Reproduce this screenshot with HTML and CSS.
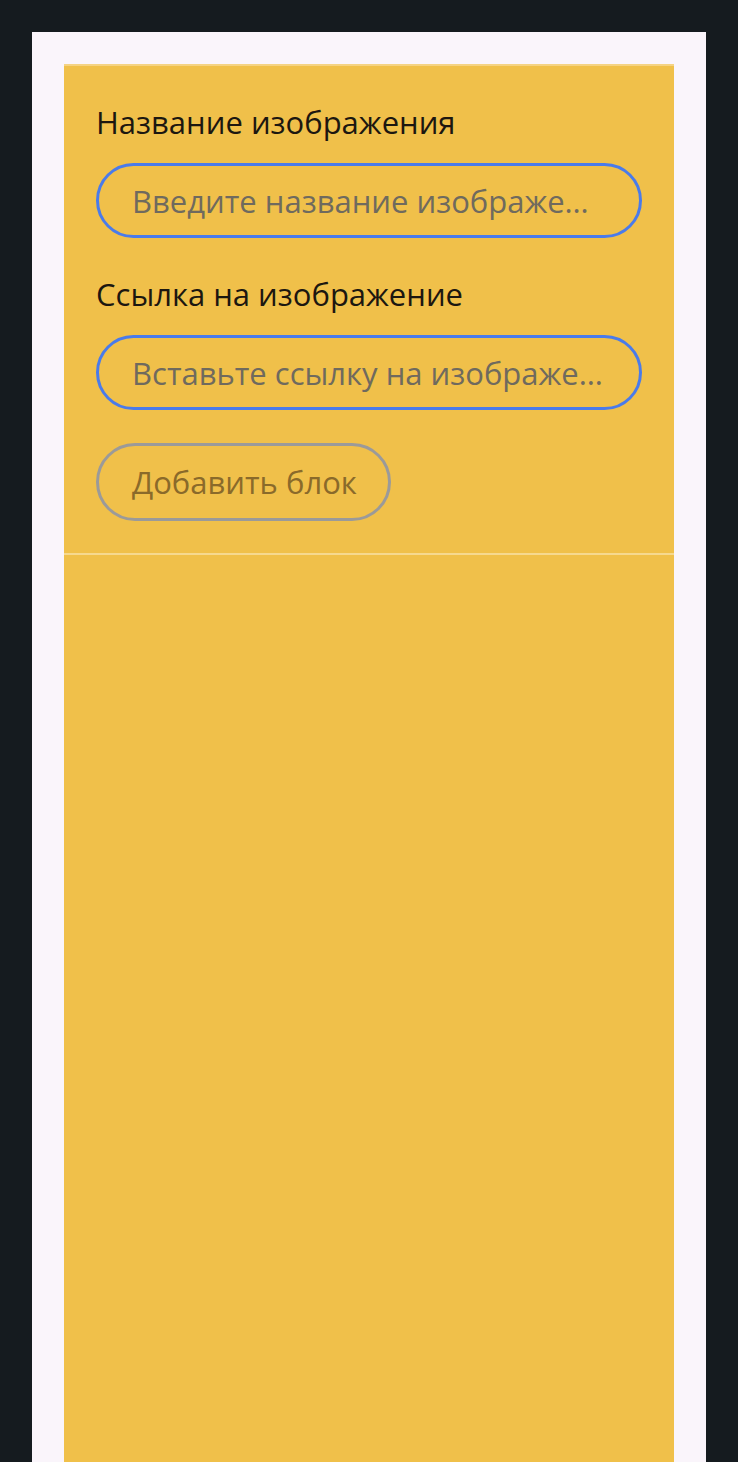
FILE: index.html
```html
<!DOCTYPE html>
<html lang="ru">
<head>
<meta charset="utf-8">
<link rel="stylesheet" href="styles.css">
</head>
<body>
<div class="panel">
  <section class="block">
    <form class="form">
      <label class="label" for="name">Название изображения</label>
      <input class="field" id="name" type="text" placeholder="Введите название изображения">
      <label class="label" for="url">Ссылка на изображение</label>
      <input class="field" id="url" type="text" placeholder="Вставьте ссылку на изображение">
      <button class="btn" type="button">Добавить блок</button>
    </form>
    <div class="rest"></div>
  </section>
</div>
</body>
</html>
```
FILE: styles.css
```css
html, body { margin: 0; height: 100%; }
body {
  background: #151b1f;
  padding: 32px 32px 0;
  box-sizing: border-box;
  font-family: "Open Sans", "Noto Sans", sans-serif;
}
.panel {
  background: #faf5fb;
  padding: 32px 32px 0;
  height: 100%;
  box-sizing: border-box;
}
.block {
  background: #f0c04a;
  border-top: 2px solid #f5d383;
  height: 100%;
  box-sizing: border-box;
}
.form {
  display: flex;
  flex-direction: column;
  align-items: flex-start;
  padding: 37px 32px 32px;
  border-bottom: 2px solid #f6d98f;
}
.label {
  font-size: 31px;
  line-height: 38px;
  color: #1c1710;
  margin-bottom: 22px;
}
.field {
  box-sizing: border-box;
  width: 100%;
  height: 75px;
  border: 3px solid #4a7bea;
  border-radius: 40px;
  background: transparent;
  padding: 0 32px 0 33px;
  font: inherit;
  font-size: 31px;
  color: #1c1710;
  outline: none;
  margin-bottom: 37px;
  text-overflow: ellipsis;
}
.field::placeholder { color: #6f6a5e; }
.field:last-of-type { margin-bottom: 33px; }
.btn {
  box-sizing: border-box;
  height: 78px;
  padding: 0 31px 0 33px;
  border: 3px solid #9b9a99;
  border-radius: 40px;
  background: transparent;
  font: inherit;
  font-size: 31px;
  color: #8a6a2a;
}
```
